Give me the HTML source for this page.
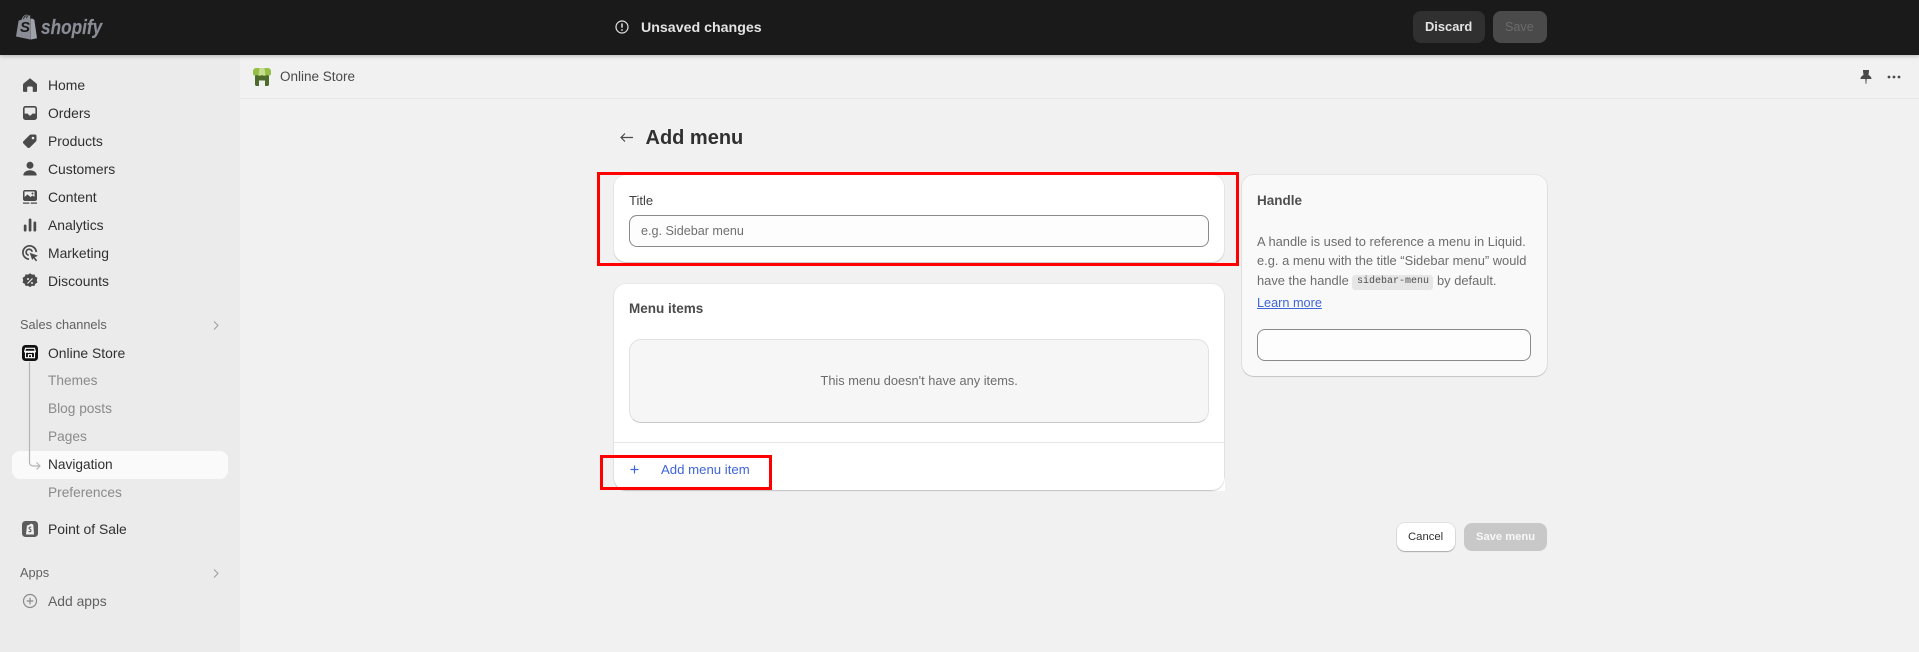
<!DOCTYPE html>
<html><head><meta charset="utf-8"><title>Add menu</title>
<style>
*{box-sizing:border-box}
html,body{margin:0;padding:0}
body{width:1919px;height:652px;overflow:hidden;position:relative;background:#f1f1f1;font-family:"Liberation Sans",sans-serif;color:#303030}
.a{position:absolute}
.t{position:absolute;white-space:nowrap;line-height:20px;height:20px;transform-origin:left center}
.n{left:48px;font-size:13.9px;color:#303030}
.s{left:48px;font-size:13.7px;color:#8a8a8a}
.h{left:20px;font-size:12.8px;color:#616161}
.ic{position:absolute;left:20px;width:20px;height:20px}
.p{font-size:12.9px;color:#6d6d6d;left:1257px}
</style></head>
<body>
<!-- sidebar -->
<div class="a" style="left:0;top:55px;width:240px;height:597px;background:#ebebeb"></div>
<!-- page header -->
<div class="a" style="left:240px;top:98px;width:1679px;height:1px;background:#e6e6e6"></div>
<!-- top bar -->
<div class="a" style="left:0;top:0;width:1919px;height:55px;background:#1a1a1a;box-shadow:0 1px 4px rgba(0,0,0,.25);z-index:3"></div>
<div class="a" style="left:0;top:0;width:1919px;height:55px;z-index:4">
<svg class="a" style="left:16px;top:14px" width="21" height="26" viewBox="0 0 21 26">
<path fill="#8a8d96" d="M0 22.5 2.6 6.6l3-1C6.6 2.4 8.6 0.6 10.6.6c.9 0 1.6.4 2.2 1l1.4-.4V25.5z"/>
<path fill="#a0a2aa" d="M14.4 4.6l2.6.1 1.4 1.4 2.6 18.1-6.6 1.4z"/>
<path fill="none" stroke="#1a1a1a" stroke-width=".8" d="M7.5 5c.6-2 1.8-3.4 3.2-3.4M10.5 4.2c.3-1.4 1-2.4 1.6-2.8"/>
</svg>
<div class="t" style="left:20px;top:18px;font:italic bold 15px/20px 'Liberation Sans',sans-serif;color:#1a1a1a">S</div>
<div class="t" style="left:41px;top:18px;font:italic bold 20px/20px 'Liberation Sans',sans-serif;color:#8a8d96;transform:scaleX(.86);-webkit-text-stroke:.15px #8a8d96">shopify</div>
<svg class="a" style="left:615px;top:20px" width="14" height="14" viewBox="0 0 14 14"><circle cx="7" cy="7" r="6" fill="none" stroke="#e3e3e3" stroke-width="1.2"/><path d="M7 3.400v4.300" stroke="#e3e3e3" stroke-width="1.500"/><circle cx="7" cy="10" r=".9" fill="#e3e3e3"/></svg>
<div class="t" style="left:641px;top:18px;font-size:14.200px;font-weight:bold;color:#e3e3e3">Unsaved changes</div>
<div class="a" style="left:1413px;top:11px;width:72px;height:32px;border-radius:8px;background:#303030"></div>
<div class="t" style="left:1425px;top:17px;font-size:12.900px;font-weight:bold;color:#e3e3e3">Discard</div>
<div class="a" style="left:1493px;top:11px;width:54px;height:32px;border-radius:8px;background:#4a4a4a"></div>
<div class="t" style="left:1505px;top:17px;font-size:12.600px;color:#6b6b6b">Save</div>
</div>

<!-- nav -->
<svg class="ic" style="top:75px" viewBox="0 0 20 20"><path fill="#4a4a4a" d="M10 3.2 3.8 8.3c-.5.4-.8 1-.8 1.6v6c0 .6.4 1 1 1h3.2v-4.2c0-.7.5-1.2 1.2-1.2h3.2c.7 0 1.2.5 1.2 1.2v4.2H16c.6 0 1-.4 1-1v-6c0-.6-.3-1.2-.8-1.6z"/></svg>
<div class="t n" style="top:75px">Home</div>
<svg class="ic" style="top:103px" viewBox="0 0 20 20"><path fill="#4a4a4a" fill-rule="evenodd" d="M5.5 3h9A2.5 2.5 0 0 1 17 5.5v9a2.5 2.5 0 0 1-2.5 2.5h-9A2.5 2.5 0 0 1 3 14.500v-9A2.500 2.500 0 0 1 5.500 3zM5.500 4.600c-.5 0-.9.4-.9.9v5.100h2.600c.6 0 1 .3 1.200.8.300.8 1 1.200 1.600 1.200s1.300-.4 1.600-1.200c.2-.5.6-.8 1.200-.8h2.600V5.500c0-.5-.4-.9-.9-.9z"/></svg>
<div class="t n" style="top:103px">Orders</div>
<svg class="ic" style="top:131px" viewBox="0 0 20 20"><path fill="#4a4a4a" fill-rule="evenodd" d="M11 3.500h4c.8 0 1.500.7 1.500 1.500v4c0 .6-.2 1.100-.6 1.500l-6 6c-.7.7-1.800.7-2.500 0l-3.900-3.900c-.7-.7-.7-1.800 0-2.500l6-6c.4-.4.9-.6 1.500-.6zm2 2.200a1.300 1.300 0 1 0 0 2.600 1.300 1.300 0 0 0 0-2.600z"/></svg>
<div class="t n" style="top:131px">Products</div>
<svg class="ic" style="top:159px" viewBox="0 0 20 20"><circle cx="10" cy="6.300" r="3.500" fill="#4a4a4a"/><path fill="#4a4a4a" d="M4 16.500c-.5 0-.8-.4-.7-.9C3.900 13 6.500 11.200 10 11.200s6.100 1.800 6.700 4.400c.1.500-.2.900-.7.900z"/></svg>
<div class="t n" style="top:159px">Customers</div>
<svg class="ic" style="top:187px" viewBox="0 0 20 20"><path fill="#4a4a4a" fill-rule="evenodd" d="M5 3h10c1.100 0 2 .9 2 2v7c0 1.100-.9 2-2 2H5c-1.100 0-2-.9-2-2V5c0-1.100.9-2 2-2zm0 1.500c-.3 0-.5.2-.5.500v5l3-2.500 3 2.500 2-1.500 2 1.500V5c0-.3-.2-.5-.5-.5z"/><circle cx="12.500" cy="6.500" r="1" fill="#4a4a4a"/><path fill="#4a4a4a" d="M3 15.500h6.300v1.300H3zM10.700 15.500H17v1.300h-6.300z"/></svg>
<div class="t n" style="top:187px">Content</div>
<svg class="ic" style="top:215px" viewBox="0 0 20 20"><rect x="3.800" y="9.500" width="2.700" height="7" rx="1.300" fill="#4a4a4a"/><rect x="8.700" y="3.500" width="2.700" height="13" rx="1.300" fill="#4a4a4a"/><rect x="13.500" y="6.500" width="2.700" height="10" rx="1.300" fill="#4a4a4a"/></svg>
<div class="t n" style="top:215px">Analytics</div>
<svg class="ic" style="top:243px" viewBox="0 0 20 20"><path fill="none" stroke="#4a4a4a" stroke-width="1.700" d="M9 16.200A6.700 6.700 0 1 1 16.300 9"/><path fill="none" stroke="#4a4a4a" stroke-width="1.700" d="M8.700 12.200a3 3 0 1 1 3.400-3.400"/><path fill="#4a4a4a" d="m9.700 9.700 8.300 3-3.300 1.500 2.500 3.200-1.200 1-2.500-3.200-1.300 1.800z"/></svg>
<div class="t n" style="top:243px">Marketing</div>
<svg class="ic" style="top:271px" viewBox="0 0 20 20"><path fill="#4a4a4a" d="M10 2.300l2 1.300 2.400-.2.900 2.200 2.100 1.200-.6 2.400.6 2.400-2.100 1.200-.9 2.200-2.400-.2-2 1.300-2-1.300-2.400.2-.9-2.200-2.100-1.200.6-2.400-.6-2.400 2.100-1.200.9-2.200 2.400.2z"/><path stroke="#ebebeb" stroke-width="1.200" d="M12.500 7.500l-5 5"/><circle cx="8" cy="8" r="1" fill="#ebebeb"/><circle cx="12" cy="12" r="1" fill="#ebebeb"/></svg>
<div class="t n" style="top:271px">Discounts</div>

<div class="t h" style="top:315px">Sales channels</div>
<svg class="a" style="left:212px;top:320px" width="8" height="11" viewBox="0 0 8 11"><path d="M2 1.500 6 5.500 2 9.500" fill="none" stroke="#9a9a9a" stroke-width="1"/></svg>

<svg class="a" style="left:22px;top:345px" width="16" height="16" viewBox="0 0 16 16"><rect width="16" height="16" rx="3.500" fill="#111"/><path fill="none" stroke="#fff" stroke-width="1.100" d="M3.500 3.300h9l.8 3H2.700zM3.500 6.300v6.400h9V6.300M2.700 6.300c0 1.500 2.700 1.500 2.700 0 0 1.500 2.600 1.500 2.600 0 0 1.500 2.600 1.500 2.600 0 0 1.500 2.700 1.500 2.700 0M6.500 12.700v-3h3v3"/></svg>
<div class="t n" style="top:343px">Online Store</div>
<div class="a" style="left:12px;top:451px;width:216px;height:28px;border-radius:8px;background:#fafafa"></div>
<svg class="a" style="left:26px;top:362px" width="16" height="110" viewBox="0 0 16 110"><path fill="none" stroke="#b5b5b5" stroke-width="1.200" d="M3.500 0v100c0 3 1.500 4 4 4h6M10.500 100.500l3.500 3.500-3.500 3.500"/></svg>
<div class="t s" style="top:371px">Themes</div>
<div class="t s" style="top:399px">Blog posts</div>
<div class="t s" style="top:427px">Pages</div>
<div class="t n" style="top:455px;font-size:13.700px">Navigation</div>
<div class="t s" style="top:483px">Preferences</div>
<svg class="a" style="left:22px;top:521px" width="16" height="16" viewBox="0 0 16 16"><rect width="16" height="16" rx="3.500" fill="#5c5c5c"/><path fill="#f2f2f2" d="M4 13.500 5 4.500 7.500 3.800C8 2.800 9 2.500 10 3l1.300.6.700 9.900z"/><path fill="none" stroke="#5c5c5c" stroke-width="1.100" d="M9.300 6.300c-1.500-.6-2.400 0-2.300.9.100.9 2 1.100 2 2.400 0 1-1.200 1.500-2.400.8"/></svg>
<div class="t n" style="top:519px">Point of Sale</div>

<div class="t h" style="top:563px">Apps</div>
<svg class="a" style="left:212px;top:568px" width="8" height="11" viewBox="0 0 8 11"><path d="M2 1.500 6 5.500 2 9.500" fill="none" stroke="#9a9a9a" stroke-width="1"/></svg>
<svg class="ic" style="top:591px" viewBox="0 0 20 20"><circle cx="10" cy="10" r="6.500" fill="none" stroke="#8a8a8a" stroke-width="1.200"/><path d="M10 6.700v6.600M6.700 10h6.600" stroke="#8a8a8a" stroke-width="1.200"/></svg>
<div class="t" style="left:48px;top:591px;font-size:13.900px;color:#616161">Add apps</div>

<!-- page header content -->
<svg class="a" style="left:253px;top:68px" width="18" height="18" viewBox="0 0 18 18"><path fill="#4d6b2b" d="M2 6h14v10.500c0 .8-.7 1.500-1.500 1.500H12v-5.500H6V18H3.500C2.700 18 2 17.300 2 16.500z"/><path fill="#95bf47" d="M3 0h12c1.700 0 3 1.500 3 3.500v2.500c0 1.800-3 2.200-4 .8-1 1.400-3.500 1.400-5 .2-1.500 1.200-4 1.200-5-.2-1 1.400-4 1-4-.8V3.500C0 1.500 1.300 0 3 0z"/><path fill="#c4dd8e" d="M6.500 0h5l1 7c-1 .6-2.500.6-3.500 0-1 .6-2.500.6-3.500 0z"/></svg>
<div class="t" style="left:280px;top:67px;font-size:13.500px;color:#4a4a4a">Online Store</div>
<svg class="a" style="left:1860px;top:69px" width="12" height="16" viewBox="0 0 12 16"><path fill="#4a4a4a" d="M3 1h6v1.500L8.500 6c1.500.8 3 2 3 4H6.700l-.4 5h-.6l-.4-5H.5c0-2 1.500-3.200 3-4L3 2.500z"/></svg>
<svg class="a" style="left:1887px;top:74px" width="14" height="6" viewBox="0 0 14 6"><circle cx="2" cy="3" r="1.400" fill="#4a4a4a"/><circle cx="7" cy="3" r="1.400" fill="#4a4a4a"/><circle cx="12" cy="3" r="1.400" fill="#4a4a4a"/></svg>

<!-- title -->
<svg class="a" style="left:619px;top:131px" width="15" height="13" viewBox="0 0 15 13"><path d="M14 6.500H2M6 2.500 2 6.500l4 4" fill="none" stroke="#4a4a4a" stroke-width="1.200"/></svg>
<div class="t" style="left:645.500px;top:128px;font-size:20px;font-weight:bold;color:#303030">Add menu</div>

<!-- Title card -->
<div class="a" style="left:614px;top:175px;width:610px;height:87px;background:#fff;border-radius:12px;box-shadow:0 1px 1px rgba(0,0,0,.14),0 0 0 1px rgba(0,0,0,.03)"></div>
<div class="t" style="left:629px;top:191px;font-size:13px;color:#404040">Title</div>
<div class="a" style="left:629px;top:215px;width:580px;height:32px;background:#fdfdfd;border:1px solid #8a8a8a;border-radius:8px"></div>
<div class="t" style="left:641px;top:221px;font-size:12.600px;color:#6f6f6f">e.g. Sidebar menu</div>
<div class="a" style="left:597px;top:172px;width:642px;height:94px;border:3px solid #f00"></div>

<!-- Menu items card -->
<div class="a" style="left:1212px;top:478px;width:13px;height:13px;background:#fff"></div>
<div class="a" style="left:614px;top:284px;width:610px;height:206px;background:#fff;border-radius:12px;box-shadow:0 1px 1px rgba(0,0,0,.16),0 0 0 1px rgba(0,0,0,.04)"></div>
<div class="t" style="left:629px;top:299px;font-size:13.500px;font-weight:bold;color:#4a4a4a">Menu items</div>
<div class="a" style="left:629px;top:339px;width:580px;height:84px;background:#f6f6f6;border:1px solid #e1e1e1;border-bottom-color:#c9c9c9;border-radius:12px"></div>
<div class="t" style="left:820.500px;top:371px;font-size:12.800px;color:#6d6d6d">This menu doesn't have any items.</div>
<div class="a" style="left:614px;top:442px;width:610px;height:1px;background:#e4e4e4"></div>
<svg class="a" style="left:630px;top:465px" width="9" height="9" viewBox="0 0 9 9"><path d="M4.500 .5v8M.5 4.500h8" stroke="#3f66d8" stroke-width="1.200"/></svg>
<div class="t" style="left:661px;top:460px;font-size:13.200px;color:#3f66d8">Add menu item</div>
<div class="a" style="left:600px;top:455px;width:172px;height:35px;border:3px solid #f00"></div>

<!-- Handle card -->
<div class="a" style="left:1242px;top:175px;width:305px;height:201px;background:#f9f9f9;border-radius:12px;box-shadow:0 1px 1px rgba(0,0,0,.14),0 0 0 1px rgba(0,0,0,.05)"></div>
<div class="t" style="left:1257px;top:191px;font-size:13.500px;font-weight:bold;color:#4f4f4f">Handle</div>
<div class="t p" style="top:232px">A handle is used to reference a menu in Liquid.</div>
<div class="t p" style="top:251px">e.g. a menu with the title “Sidebar menu” would</div>
<div class="t p" style="top:271px">have the handle</div>
<div class="a" style="left:1352px;top:275px;width:81px;height:15px;background:#e6e6e6;border-radius:3px"></div>
<div class="t" style="left:1357px;top:272px;font:10px/20px 'Liberation Mono',monospace;color:#4f4f4f">sidebar-menu</div>
<div class="t p" style="top:271px;left:1437px">by default.</div>
<div class="t" style="left:1257px;top:293px;font-size:12.700px;color:#3f66d8;text-decoration:underline">Learn more</div>
<div class="a" style="left:1257px;top:329px;width:274px;height:32px;background:#fdfdfd;border:1px solid #8a8a8a;border-radius:8px"></div>

<!-- footer -->
<div class="a" style="left:1397px;top:523px;width:58px;height:28px;background:#fff;border-radius:8px;box-shadow:0 1px 1px rgba(0,0,0,.25),0 0 0 1px rgba(0,0,0,.06)"></div>
<div class="t" style="left:1408px;top:527px;font-size:11.300px;color:#303030">Cancel</div>
<div class="a" style="left:1464px;top:523px;width:83px;height:28px;background:#c8c8c8;border-radius:8px"></div>
<div class="t" style="left:1476px;top:527px;font-size:11.200px;font-weight:bold;color:#f7f7f7">Save menu</div>
</body></html>
